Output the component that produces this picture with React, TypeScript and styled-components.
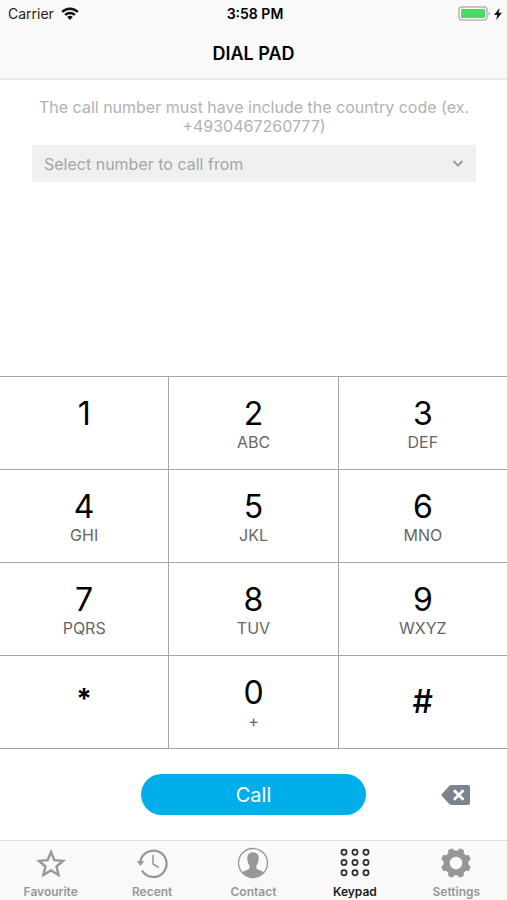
import React from "react";
import styled, { createGlobalStyle } from "styled-components";

const GlobalStyle = createGlobalStyle`
  * { box-sizing: border-box; }
  body {
    margin: 0;
    background: #fff;
    color: #000;
    font-family: Inter, "Liberation Sans", sans-serif;
  }
  button, select { font: inherit; color: inherit; }
`;

const Screen = styled.div`
  display: flex;
  flex-direction: column;
  min-height: 100vh;
`;

const Header = styled.header`
  background: #f9f9f9;
  border-bottom: 2px solid #ebebeb;
`;

const StatusBar = styled.div`
  display: grid;
  grid-template-columns: 1fr auto 1fr;
  align-items: center;
  height: 27px;
  padding: 0 5px 0 8px;
  font-size: 14px;
`;

const Carrier = styled.div`
  display: flex;
  align-items: center;
  gap: 7px;
  color: #222;
`;

const Clock = styled.time`
  font-weight: 600;
`;

const Power = styled.div`
  display: flex;
  align-items: center;
  justify-content: flex-end;
  gap: 3px;
`;

const Title = styled.h1`
  margin: 0;
  height: 51px;
  line-height: 53px;
  text-align: center;
  font-size: 18px;
  font-weight: 600;
`;

const Caller = styled.section`
  flex: 1;
  padding: 18px 31px 0 32px;
`;

const Hint = styled.label`
  display: block;
  margin-bottom: 9px;
  text-align: center;
  font-size: 16px;
  line-height: 19px;
  color: #b2b2b2;
`;

const SelectBox = styled.div`
  display: grid;
  align-items: center;
  height: 37px;
  background: #f0f0f0;

  > * { grid-area: 1 / 1; }
  > svg {
    justify-self: end;
    margin-right: 12px;
    pointer-events: none;
  }
`;

const NumberSelect = styled.select`
  appearance: none;
  width: 100%;
  height: 100%;
  padding: 0 36px 0 12px;
  border: 0;
  border-radius: 0;
  background: transparent;
  font-size: 16px;
  color: #a6a6a6;
`;

const Pad = styled.section`
  display: grid;
  grid-template-columns: repeat(3, 1fr);
  gap: 1px;
  padding: 1px 0;
  background: #a6a6a6;
`;

const Key = styled.button<{ $symbol?: boolean }>`
  display: flex;
  flex-direction: column;
  align-items: center;
  justify-content: ${(p) => (p.$symbol ? "center" : "flex-start")};
  height: 92px;
  padding: ${(p) => (p.$symbol ? "0" : "18px 0 0")};
  border: 0;
  background: #fff;
`;

const Digit = styled.span<{ $symbol?: boolean }>`
  font-size: 32px;
  line-height: 38px;
  font-weight: ${(p) => (p.$symbol ? 500 : 400)};
`;

const Star = styled.span`
  font-size: 28px;
  line-height: 38px;
  font-weight: 700;
  padding-bottom: 6px;
`;

const Letters = styled.span`
  font-size: 16px;
  line-height: 18px;
  color: #666;
`;

const Actions = styled.section`
  display: grid;
  grid-template-columns: 5fr 8fr 5fr;
  align-items: center;
  height: 91px;
`;

const CallButton = styled.button`
  grid-column: 2;
  height: 41px;
  border: 0;
  border-radius: 21px;
  background: #00aeea;
  color: #fff;
  font-size: 20px;
`;

const DeleteButton = styled.button`
  justify-self: end;
  display: flex;
  margin-right: 36px;
  padding: 0;
  border: 0;
  background: transparent;
`;

const TabBar = styled.nav`
  display: grid;
  grid-template-columns: repeat(5, 1fr);
  height: 60px;
  background: #f9f9f9;
  border-top: 1px solid #dedede;
`;

const Tab = styled.a<{ $active?: boolean }>`
  display: flex;
  flex-direction: column;
  align-items: center;
  gap: 4px;
  padding-top: 6px;
  text-decoration: none;
  font-size: 12px;
  line-height: 17px;
  font-weight: 600;
  color: ${(p) => (p.$active ? "#1c1c1c" : "#979797")};
`;

const WifiIcon = () => (
  <svg width="18" height="13" viewBox="0 0 18 13" fill="none" stroke="#111" strokeWidth="2.4">
    <path d="M1.2 5A11 11 0 0 1 16.8 5" />
    <path d="M4.1 8A6.9 6.9 0 0 1 13.9 8" />
    <path d="M9 13L6.2 10.1A4 4 0 0 1 11.8 10.1Z" fill="#111" stroke="none" />
  </svg>
);

const BatteryIcon = () => (
  <svg width="33" height="15" viewBox="0 0 33 15">
    <rect x="1" y="1" width="28" height="13" rx="3" fill="#fff" stroke="#b3b3b3" strokeWidth="1.4" />
    <rect x="3" y="3" width="24" height="9" rx="1" fill="#4cd964" />
    <path d="M30.5 5.2Q33.5 7.5 30.5 9.8Z" fill="#b3b3b3" />
  </svg>
);

const BoltIcon = () => (
  <svg width="8" height="12" viewBox="0 0 8 12">
    <path d="M5.6 0L0 7H3.2L2.2 12L8 4.8H4.7Z" fill="#111" />
  </svg>
);

const ChevronIcon = () => (
  <svg width="12" height="10" viewBox="0 0 12 10" fill="none" stroke="#9b9b9b" strokeWidth="2">
    <path d="M1.5 2L6 6.5L10.5 2" />
  </svg>
);

const BackspaceIcon = () => (
  <svg width="30" height="20" viewBox="0 0 30 20">
    <path
      d="M.7 9.2L8 1.2Q9 0 10.5 0H27Q29 0 29 2V18Q29 20 27 20H10.5Q9 20 8 18.8L.7 10.8Q0 10 .7 9.2Z"
      fill="#7a838e"
    />
    <path d="M13 5.2L22.5 14.8M22.5 5.2L13 14.8" stroke="#fff" strokeWidth="2.8" />
  </svg>
);

const StarIcon = () => (
  <svg width="32" height="32" viewBox="0 0 32 32" fill="none" stroke="#979797" strokeWidth="2.4">
    <path d="M16 5L19.4 13.2L28 13.9L21.5 19.5L23.6 28L16 23.4L8.4 28L10.5 19.5L4 13.9L12.6 13.2Z" />
  </svg>
);

const RecentIcon = () => (
  <svg width="32" height="32" viewBox="0 0 32 32" fill="none" stroke="#979797">
    <path d="M4.3 15A13.2 13.2 0 1 1 6 23.5" strokeWidth="2.2" />
    <path d="M.8 14H8.2L4.5 19Z" fill="#979797" stroke="none" />
    <path d="M17 8V17L23 20.5" strokeWidth="1.5" />
  </svg>
);

const ContactIcon = () => (
  <svg width="32" height="32" viewBox="0 0 32 32">
    <circle cx="16" cy="16" r="14.5" fill="none" stroke="#979797" strokeWidth="1.3" />
    <path
      d="M16 5.2C12 5.2 10 8 10.3 11.5C10.4 14.5 11.3 17 12.6 18.5C12.9 20.5 12.6 21.8 11 22.5L5.3 25A14 14 0 0 0 26.7 25L21 22.5C19.4 21.8 19.1 20.5 19.4 18.5C20.7 17 21.6 14.5 21.7 11.5C22 8 20 5.2 16 5.2Z"
      fill="#979797"
    />
  </svg>
);

const KeypadIcon = () => (
  <svg width="32" height="32" viewBox="0 0 32 32" fill="none" stroke="#2e2e2e" strokeWidth="1.7">
    {[5.3, 15.5, 25.7].map((y) =>
      [5, 16, 27].map((x) => <circle key={`${x}-${y}`} cx={x} cy={y} r="2.6" />)
    )}
  </svg>
);

const GearIcon = () => (
  <svg width="32" height="32" viewBox="0 0 32 32">
    <circle cx="16" cy="16" r="9.4" fill="none" stroke="#979797" strokeWidth="6.2" />
    {[0, 1, 2, 3, 4, 5, 6, 7].map((i) => (
      <path
        key={i}
        d="M12.2 6L13.3 1.9Q13.5 1 14.4 1H17.6Q18.5 1 18.7 1.9L19.8 6Z"
        fill="#979797"
        transform={`rotate(${22.5 + i * 45} 16 16)`}
      />
    ))}
  </svg>
);

const KEYS = [
  { digit: "1", letters: "" },
  { digit: "2", letters: "ABC" },
  { digit: "3", letters: "DEF" },
  { digit: "4", letters: "GHI" },
  { digit: "5", letters: "JKL" },
  { digit: "6", letters: "MNO" },
  { digit: "7", letters: "PQRS" },
  { digit: "8", letters: "TUV" },
  { digit: "9", letters: "WXYZ" },
  { digit: "*", letters: "", symbol: true },
  { digit: "0", letters: "+" },
  { digit: "#", letters: "", symbol: true },
];

const TABS = [
  { label: "Favourite", Icon: StarIcon },
  { label: "Recent", Icon: RecentIcon },
  { label: "Contact", Icon: ContactIcon },
  { label: "Keypad", Icon: KeypadIcon, active: true },
  { label: "Settings", Icon: GearIcon },
];

export default function App() {
  return (
    <Screen>
      <GlobalStyle />
      <Header>
        <StatusBar>
          <Carrier>
            Carrier
            <WifiIcon />
          </Carrier>
          <Clock>3:58 PM</Clock>
          <Power>
            <BatteryIcon />
            <BoltIcon />
          </Power>
        </StatusBar>
        <Title>DIAL PAD</Title>
      </Header>
      <Caller>
        <Hint htmlFor="from-number">
          The call number must have include the country code (ex. +4930467260777)
        </Hint>
        <SelectBox>
          <NumberSelect id="from-number">
            <option>Select number to call from</option>
          </NumberSelect>
          <ChevronIcon />
        </SelectBox>
      </Caller>
      <Pad>
        {KEYS.map(({ digit, letters, symbol }) => (
          <Key key={digit} type="button" $symbol={symbol}>
            {digit === "*" ? <Star>*</Star> : <Digit $symbol={symbol}>{digit}</Digit>}
            {letters && <Letters>{letters}</Letters>}
          </Key>
        ))}
      </Pad>
      <Actions>
        <CallButton type="button">Call</CallButton>
        <DeleteButton type="button" aria-label="Delete">
          <BackspaceIcon />
        </DeleteButton>
      </Actions>
      <TabBar>
        {TABS.map(({ label, Icon, active }) => (
          <Tab key={label} href={`#${label.toLowerCase()}`} $active={active}>
            <Icon />
            {label}
          </Tab>
        ))}
      </TabBar>
    </Screen>
  );
}
